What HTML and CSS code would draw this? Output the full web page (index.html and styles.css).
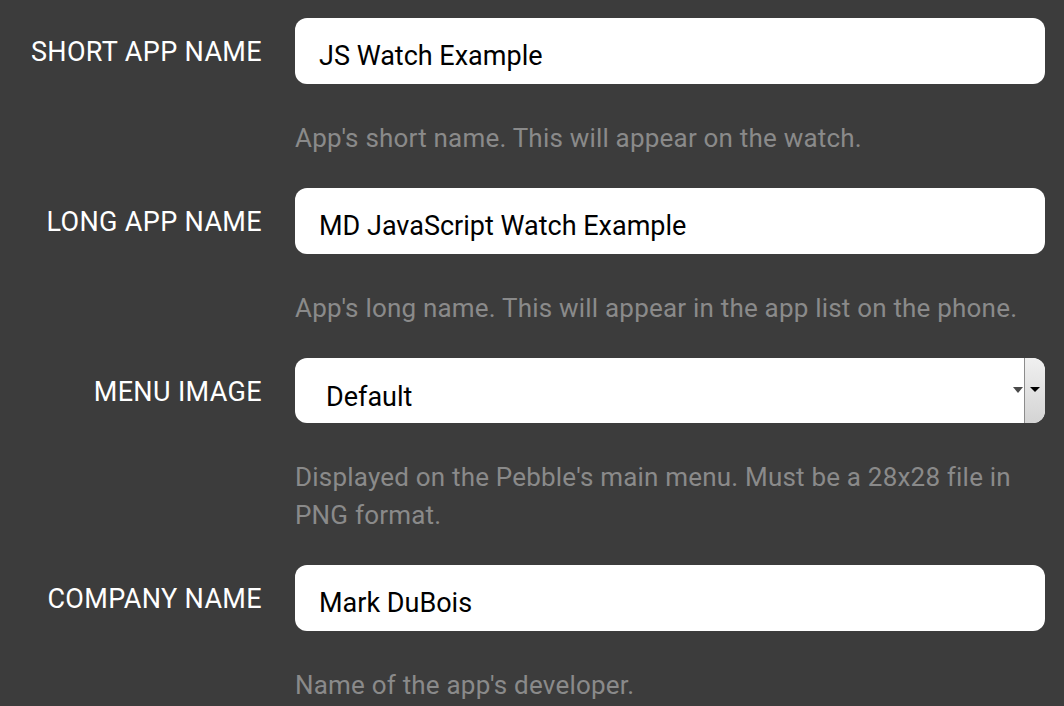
FILE: index.html
```html
<!DOCTYPE html>
<html lang="en">
<head>
    <meta charset="UTF-8">
    <meta name="viewport" content="width=device-width, initial-scale=1.0">
    <title>App settings</title>
    <link rel="stylesheet" href="styles.css">
</head>
<body>
    <form class="settings">
        <div class="field">
            <label for="short_name">SHORT APP NAME</label>
            <div class="control">
                <input type="text" id="short_name" name="short_name" value="JS Watch Example">
                <div class="help">App's short name. This will appear on the watch.</div>
            </div>
        </div>

        <div class="field">
            <label for="long_name">LONG APP NAME</label>
            <div class="control">
                <input type="text" id="long_name" name="long_name" value="MD JavaScript Watch Example">
                <div class="help">App's long name. This will appear in the app list on the phone.</div>
            </div>
        </div>

        <div class="field">
            <label for="menu_image">MENU IMAGE</label>
            <div class="control">
                <div class="select-wrap">
                    <select id="menu_image" name="menu_image">
                        <option value="">Default</option>
                    </select>
                    <span class="select-arrow"></span>
                    <span class="select-btn"><span class="select-btn-arrow"></span></span>
                </div>
                <div class="help">Displayed on the Pebble's main menu. Must be a 28x28 file in PNG format.</div>
            </div>
        </div>

        <div class="field">
            <label for="company_name">COMPANY NAME</label>
            <div class="control">
                <input type="text" id="company_name" name="company_name" value="Mark DuBois">
                <div class="help">Name of the app's developer.</div>
            </div>
        </div>
    </form>
</body>
</html>
```

FILE: styles.css
```css
body {
    margin: 0;
    background-color: #3c3c3c;
    font-family: Roboto, 'Liberation Sans', sans-serif;
}
.settings {
    padding: 18px 19px 0 0;
}
.field {
    display: grid;
    grid-template-columns: 262px 1fr;
    column-gap: 33px;
    margin-bottom: 31px;
}
label {
    color: #ffffff;
    font-size: 27px;
    letter-spacing: 0.35px;
    line-height: 66px;
    padding-top: 1px;
    text-align: right;
}
input[type="text"], .select-wrap {
    display: block;
    width: 100%;
    height: 66px;
    box-sizing: border-box;
    margin: 0;
    padding: 10px 24px 0;
    border: none;
    border-radius: 12px;
    background-color: #ffffff;
    color: #000000;
    font-family: inherit;
    font-size: 27px;
    outline: none;
}
.select-wrap {
    position: relative;
    display: flex;
    padding: 0;
    height: 65px;
    overflow: hidden;
}
.select-wrap select {
    flex: 1;
    appearance: none;
    -webkit-appearance: none;
    border: none;
    background: transparent;
    padding: 12px 0 0 31px;
    font-family: inherit;
    font-size: 27px;
    color: #000000;
    outline: none;
}
.select-arrow {
    position: absolute;
    right: 22px;
    top: 29px;
    width: 0;
    height: 0;
    border-left: 5px solid transparent;
    border-right: 5px solid transparent;
    border-top: 6px solid #4a4a4a;
    filter: blur(0.4px);
}
.select-btn {
    width: 20px;
    border-left: 1px solid #8c8c8c;
    border-radius: 0 12px 12px 0;
    background: linear-gradient(#f0f0f0, #d4d4d4);
    position: relative;
}
.select-btn-arrow {
    position: absolute;
    left: 5px;
    top: 29px;
    width: 0;
    height: 0;
    border-left: 5px solid transparent;
    border-right: 5px solid transparent;
    border-top: 5px solid #000000;
}
.help {
    margin-top: 35px;
    color: #8a8a8a;
    font-size: 26px;
    letter-spacing: 0.2px;
    line-height: 38px;
}
```
